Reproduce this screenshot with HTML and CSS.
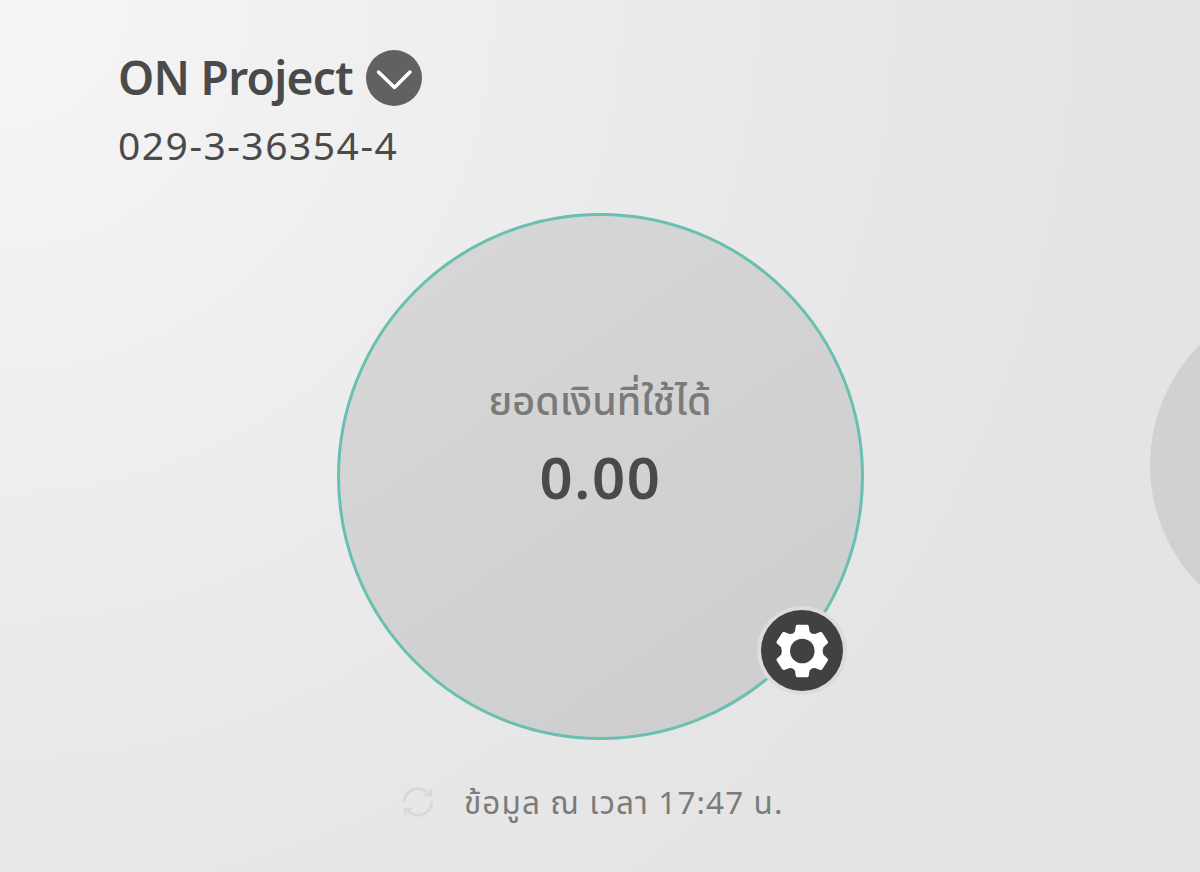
FILE: index.html
```html
<!DOCTYPE html>
<html lang="th">

<head>
    <meta charset="UTF-8">
    <meta name="viewport" content="width=device-width, initial-scale=1.0">
    <title>ON Project</title>
    <link rel="stylesheet" href="styles.css">
</head>

<body>
    <header class="account">
        <div class="account-row">
            <h1 class="account-name">ON Project</h1>
            <button class="account-toggle" type="button">
                <svg viewBox="0 0 56 56" width="56" height="56">
                    <path d="M12.500 22 L28.500 37.500 L44 22" />
                </svg>
            </button>
        </div>
        <div class="account-number">029-3-36354-4</div>
    </header>

    <main class="balance">
        <div class="balance-label">ยอดเงินที่ใช้ได้</div>
        <div class="balance-amount">0.00</div>
        <button class="settings" type="button">
            <svg viewBox="0 0 54 54" width="54" height="54">
                <path class="gear" d="M20.800 2 Q21.100 .8 22.200 .8 H32.300 Q33.400 .8 33.700 2 L34.600 7.600 Q36.500 10.600 40 10 L45.200 8 Q46.500 7.600 47.300 8.700 L52.900 17.600 Q53.400 18.800 52.500 19.600 L48.400 23.200 Q46.800 27 48.400 30.800 L52.500 34.400 Q53.400 35.200 52.900 36.400 L47.300 45.300 Q46.500 46.400 45.200 46 L40 44 Q36.500 43.400 34.600 46.400 L33.700 52 Q33.400 53.200 32.300 53.200 H22.200 Q21.100 53.200 20.800 52 L19.900 46.400 Q18 43.400 14.500 44 L9.300 46 Q8 46.400 7.200 45.300 L1.600 36.400 Q1.100 35.200 2 34.400 L6.100 30.800 Q7.700 27 6.100 23.200 L2 19.600 Q1.100 18.800 1.600 17.600 L7.200 8.700 Q8 7.600 9.300 8 L14.500 10 Q18 10.600 19.900 7.600 Z" />
                <circle class="gear-hole" cx="27.300" cy="27" r="12.300" />
            </svg>
        </button>
    </main>

    <footer class="updated">
        <svg class="refresh" viewBox="0 0 32 32" width="32" height="32">
            <path d="M2 17 A14 14 0 0 1 27 8 M29 3 V9 H22 M30 15 A14 14 0 0 1 5 24 M3 29 V23 H10" />
        </svg>
        <span class="updated-text">ข้อมูล ณ เวลา 17:47 น.</span>
    </footer>

    <svg class="next-card" viewBox="0 0 50 342" width="50" height="342">
        <circle cx="171" cy="171" r="171" />
    </svg>
</body>

</html>
```
FILE: styles.css
```css
body {
    position: relative;
    display: flex;
    flex-direction: column;
    height: 872px;
    margin: 0;
    overflow: hidden;
    font-family: "Noto Sans", "Noto Sans Thai", sans-serif;
    color: #4a4a4a;
    background: radial-gradient(circle 1150px at 0 0, #f6f6f6 0%, #f1f1f1 25%, #ececec 50%, #e7e7e7 78%, #e4e4e4 100%);
}

button {
    padding: 0;
    border: none;
    border-radius: 50%;
    cursor: pointer;
}

svg {
    display: block;
}

.account {
    height: 163px;
    padding: 50px 0 0 118px;
}

.account-row {
    display: flex;
    align-items: center;
    gap: 13px;
    height: 56px;
}

.account-name {
    width: 235px;
    height: 56px;
    margin: 0;
    font-size: 46px;
    font-weight: 600;
    line-height: 54px;
    letter-spacing: -0.700px;
    white-space: nowrap;
}

.account-toggle {
    width: 56px;
    height: 56px;
    background-color: #616161;
}

.account-toggle path {
    fill: none;
    stroke: #fff;
    stroke-width: 3.500;
    stroke-linecap: round;
    stroke-linejoin: round;
}

.account-number {
    margin-top: 15px;
    font-size: 39px;
    line-height: 48px;
    letter-spacing: 1.500px;
}

.balance {
    position: relative;
    box-sizing: border-box;
    width: 527px;
    height: 527px;
    margin: 0 auto;
    padding-top: 154px;
    border: 3px solid #69bfb0;
    border-radius: 50%;
    text-align: center;
    background: linear-gradient(145deg, #d8d8d8 0%, #d2d2d2 50%, #cdcdcd 100%);
}

.balance-label {
    height: 60px;
    font-size: 39.500px;
    font-weight: 500;
    line-height: 60px;
    color: #7a7a7a;
    white-space: nowrap;
}

.balance-amount {
    margin-top: 12px;
    padding-left: 1px;
    font-size: 58px;
    font-weight: 600;
    line-height: 70px;
    letter-spacing: 1.600px;
}

.settings {
    position: absolute;
    left: 417px;
    top: 390px;
    display: flex;
    align-items: center;
    justify-content: center;
    width: 90px;
    height: 89px;
    border: 4px solid #dcdcdc;
    background-color: #414141;
}

.gear {
    fill: #fff;
}

.gear-hole {
    fill: #414141;
}

.updated {
    display: flex;
    align-items: center;
    gap: 30px;
    height: 60px;
    margin-top: 32px;
    padding-left: 402px;
    color: #7b7b7b;
}

.refresh {
    fill: none;
    stroke: #d8d8d8;
    stroke-width: 2.500;
}

.updated-text {
    font-size: 31.500px;
    line-height: 58px;
    letter-spacing: 1.100px;
    white-space: nowrap;
}

/* edge of the next account in the carousel */
.next-card {
    position: absolute;
    right: 0;
    top: 294px;
    fill: #d1d1d1;
}
```
